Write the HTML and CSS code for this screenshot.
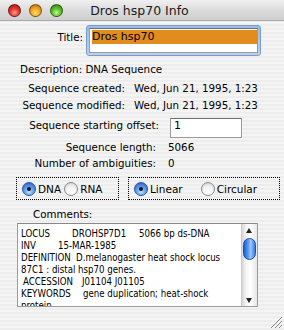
FILE: index.html
```html
<!DOCTYPE html>
<html>
<head>
<meta charset="utf-8">
<link rel="stylesheet" href="styles.css">
</head>
<body>
<div class="window">
  <div class="titlebar">
    <div class="lights">
      <span class="light red"></span>
      <span class="light yellow"></span>
      <span class="light green"></span>
    </div>
    <div class="wtitle">Dros hsp70 Info</div>
  </div>
  <div class="content">
    <div class="row title-row">
      <div class="lbl lbl-title">Title:</div>
      <div class="ring">
        <div class="field big"><span class="sel">Dros hsp70</span></div>
      </div>
    </div>
    <div class="row desc-row">Description: DNA Sequence</div>
    <div class="row date-row r-created">
      <div class="lbl lbl-date">Sequence created:</div>
      <div class="val val-date">Wed, Jun 21, 1995, 1:23</div>
    </div>
    <div class="row date-row r-modified">
      <div class="lbl lbl-date">Sequence modified:</div>
      <div class="val val-date">Wed, Jun 21, 1995, 1:23</div>
    </div>
    <div class="row offset-row">
      <div class="lbl lbl-offset">Sequence starting offset:</div>
      <div class="field small">1</div>
    </div>
    <div class="row info-row r-length">
      <div class="lbl lbl-info">Sequence length:</div>
      <div class="val val-info">5066</div>
    </div>
    <div class="row info-row r-amb">
      <div class="lbl lbl-info">Number of ambiguities:</div>
      <div class="val val-info">0</div>
    </div>
    <div class="row radio-row">
      <div class="group g-left">
        <span class="radio on"></span><span class="rtext">DNA</span>
        <span class="radio off"></span><span class="rtext">RNA</span>
      </div>
      <div class="group g-right">
        <span class="radio on"></span><span class="rtext t-linear">Linear</span>
        <span class="radio off"></span><span class="rtext">Circular</span>
      </div>
    </div>
    <div class="row comments-label">Comments:</div>
    <div class="textarea">
      <div class="text">
        <div class="ln"><span class="c c-locus">LOCUS</span><span class="c c-name">DROHSP7D1</span><span>5066 bp ds-DNA</span></div>
        <div class="ln"><span class="c c-inv">INV</span><span>15-MAR-1985</span></div>
        <div class="ln"><span class="c c-def">DEFINITION</span><span>D.melanogaster heat shock locus</span></div>
        <div class="ln">87C1 : distal hsp70 genes.</div>
        <div class="ln ln-acc"><span class="c c-acc">ACCESSION</span><span>J01104 J01105</span></div>
        <div class="ln"><span class="c c-key">KEYWORDS</span><span>gene duplication; heat-shock</span></div>
        <div class="ln">protein.</div>
      </div>
      <div class="scrollbar">
        <div class="arrow up"></div>
        <div class="thumb"></div>
        <div class="track"></div>
        <div class="arrow down"></div>
      </div>
    </div>
  </div>
  <svg class="grip" width="14" height="14" viewBox="0 0 14 14">
    <line x1="13" y1="2" x2="2" y2="13" stroke="#8a8a8a" stroke-width="1"/>
    <line x1="13" y1="6" x2="6" y2="13" stroke="#8a8a8a" stroke-width="1"/>
    <line x1="13" y1="10" x2="10" y2="13" stroke="#8a8a8a" stroke-width="1"/>
  </svg>
</div>
</body>
</html>
```
FILE: styles.css
```css
html, body {
  margin: 0;
  padding: 0;
}
body {
  width: 284px;
  height: 330px;
  overflow: hidden;
  font-family: "DejaVu Sans", sans-serif;
  font-size: 10.3px;
  color: #000;
}
.window {
  position: relative;
  width: 284px;
  height: 330px;
  background: repeating-linear-gradient(to bottom, #ededed 0, #ededed 2px, #f4f4f4 2px, #f4f4f4 4px);
}
.titlebar {
  height: 21px;
  border-bottom: 1px solid #a8a8a8;
  background: linear-gradient(to bottom, #f0f0f0 0%, #dcdcdc 50%, #cfcfcf 100%);
  display: flex;
  align-items: center;
  box-sizing: border-box;
}
.lights {
  display: flex;
  gap: 8px;
  padding-left: 8px;
}
.light {
  width: 13px;
  height: 13px;
  border-radius: 50%;
  box-sizing: border-box;
  border: 1px solid rgba(0,0,0,0.45);
}
.red { background: radial-gradient(circle at 50% 70%, #ff9a8f 0%, #e33a2e 45%, #a01010 100%); }
.yellow { background: radial-gradient(circle at 50% 70%, #ffe08a 0%, #f3a420 45%, #b06a00 100%); }
.green { background: radial-gradient(circle at 50% 70%, #c7f59a 0%, #5fbf2a 45%, #2e7a0a 100%); }
.wtitle {
  flex: 1;
  text-align: center;
  font-size: 12.5px;
  color: #1a1a1a;
  padding-right: 68px;
}
.content {
  display: flex;
  flex-direction: column;
}
.row {
  display: flex;
  line-height: 14px;
  height: 14px;
}
.lbl { text-align: right; white-space: nowrap; }
.title-row { margin-top: 4px; height: 31px; align-items: flex-start; }
.lbl-title { width: 83px; padding-top: 5px; }
.ring {
  margin-left: 3px;
  width: 175px;
  height: 31px;
  box-sizing: border-box;
  border-radius: 3px;
  border: 1px solid #7a9cc8;
  background: linear-gradient(to bottom, #9cbce2, #b9d1ee);
  padding: 2px;
}
.field {
  background: #fff;
  box-sizing: border-box;
  border: 1px solid #9a9a9a;
  border-top-color: #6f6f6f;
}
.field.big {
  height: 100%;
  padding: 1px 0 0 2px;
  line-height: 14px;
}
.sel {
  display: block;
  background: #e28b1e;
  font-size: 11px;
  height: 14px;
  line-height: 14px;
}
.desc-row { margin-top: 6px; padding-left: 20px; }
.r-created { margin-top: 5px; }
.r-modified { margin-top: 3px; }
.lbl-date { width: 125px; }
.val-date { margin-left: 9px; }
.offset-row { margin-top: 6px; height: 20px; align-items: flex-start; }
.lbl-offset { width: 159px; }
.field.small {
  margin-left: 11px;
  width: 72px;
  height: 20px;
  padding: 0 3px;
  line-height: 13px;
  font-size: 11px;
}
.r-length { margin-top: 2px; }
.r-amb { margin-top: 2px; }
.lbl-info { width: 156px; }
.val-info { margin-left: 12px; }
.radio-row { margin-top: 7px; height: 23px; }
.group {
  box-sizing: border-box;
  height: 23px;
  border: 1px dotted #000;
  display: flex;
  align-items: center;
}
.g-left { margin-left: 16px; width: 103px; padding-left: 5px; }
.g-right { margin-left: 9px; width: 152px; padding-left: 5px; }
.radio {
  width: 14px;
  height: 14px;
  border-radius: 50%;
  box-sizing: border-box;
  position: relative;
  flex: none;
}
.radio.on {
  border: 1px solid #2a4f9a;
  background: radial-gradient(circle at 50% 75%, #bfe2ff 0%, #5e9ef0 45%, #1f57c4 100%);
}
.radio.on::after {
  content: "";
  position: absolute;
  left: 4px;
  top: 4px;
  width: 4px;
  height: 4px;
  border-radius: 50%;
  background: #111;
}
.radio.off {
  border: 1px solid #8a8a8a;
  background: radial-gradient(circle at 50% 75%, #ffffff 0%, #f2f2f2 50%, #c8c8c8 100%);
}
.rtext { margin-left: 2px; margin-right: 3px; font-size: 10.5px; }
.t-linear { margin-right: 18px; }
.comments-label { margin-top: 7px; padding-left: 33px; }
.textarea {
  margin-top: 2px;
  margin-left: 17px;
  width: 241px;
  height: 84px;
  box-sizing: border-box;
  border: 1px solid #9c9c9c;
  border-top-color: #888;
  background: #fff;
  display: flex;
  overflow: hidden;
}
.text {
  flex: 1;
  min-width: 0;
  font-family: "DejaVu Sans Condensed", "DejaVu Sans", sans-serif;
  font-stretch: condensed;
  font-size: 9.6px;
  line-height: 12px;
  padding: 4px 0 0 3px;
  overflow: hidden;
}
.ln { white-space: nowrap; height: 12px; }
.c { display: inline-block; }
.c-locus { width: 51px; }
.c-name { width: 67px; }
.c-inv { width: 37px; }
.c-def { width: 55px; }
.ln-acc { padding-left: 2px; }
.c-acc { width: 59px; }
.c-key { width: 62px; }
.scrollbar {
  width: 15px;
  flex: none;
  display: flex;
  flex-direction: column;
  border-left: 1px solid #c9c9c9;
  background: linear-gradient(to right, #d8d8d8 0%, #f6f6f6 30%, #ffffff 55%, #e6e6e6 100%);
}
.arrow {
  height: 12px;
  position: relative;
  flex: none;
}
.arrow.up::after, .arrow.down::after {
  content: "";
  position: absolute;
  left: 4px;
  width: 0;
  height: 0;
  border-left: 3.5px solid transparent;
  border-right: 3.5px solid transparent;
}
.arrow.up::after { top: 4px; border-bottom: 5px solid #222; }
.arrow.down::after { top: 4px; border-top: 5px solid #222; }
.thumb {
  margin: 2px 1px 0 1px;
  height: 20px;
  border-radius: 7px;
  border: 1px solid #1f4fa8;
  background: linear-gradient(to right, #1e5ed0 0%, #5c9cf2 40%, #9cc8ff 60%, #3a7ae2 100%);
  flex: none;
}
.track {
  flex: 1;
}
.grip {
  position: absolute;
  right: 1px;
  bottom: 1px;
}
```
